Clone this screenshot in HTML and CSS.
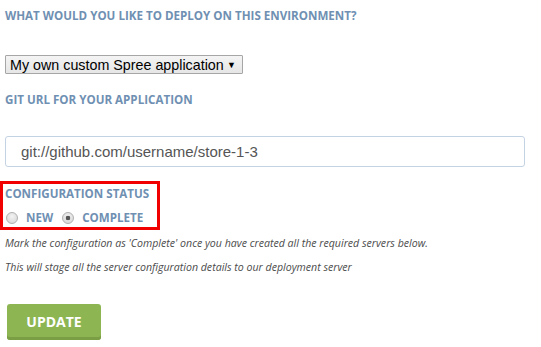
FILE: index.html
```html
<!DOCTYPE html>
<html>
<head>
<meta charset="utf-8">
<link rel="stylesheet" href="styles.css">
</head>
<body>
<form class="form">
  <div class="label label-first">WHAT WOULD YOU LIKE TO DEPLOY ON THIS ENVIRONMENT?</div>
  <div class="select"><span class="select-text">My own custom Spree application</span><span class="select-arrow">▼</span></div>
  <div class="label label-git">GIT URL FOR YOUR APPLICATION</div>
  <input class="text-input" type="text" value="git://github.com/username/store-1-3">
  <div class="status-box">
    <div class="label">CONFIGURATION STATUS</div>
    <div class="radios">
      <label class="radio-item"><input class="radio" type="radio" name="status"><span>NEW</span></label>
      <label class="radio-item"><input class="radio" type="radio" name="status" checked><span>COMPLETE</span></label>
    </div>
  </div>
  <p class="hint hint-first">Mark the configuration as 'Complete' once you have created all the required servers below.</p>
  <p class="hint">This will stage all the server configuration details to our deployment server</p>
  <button class="btn" type="button">UPDATE</button>
</form>
</body>
</html>
```

FILE: styles.css
```css
html, body {
  margin: 0;
  padding: 0;
  background: #ffffff;
}
.form {
  display: flex;
  flex-direction: column;
  align-items: flex-start;
  padding-left: 5px;
  font-family: "Open Sans", sans-serif;
}
.label {
  font-family: "Open Sans", sans-serif;
  font-weight: 700;
  font-size: 11.6px;
  line-height: 16px;
  color: #6f90b2;
  white-space: nowrap;
}
.label-first {
  margin-top: 8px;
}
.select {
  margin-top: 31px;
  box-sizing: border-box;
  height: 19px;
  width: 238px;
  display: flex;
  align-items: center;
  justify-content: space-between;
  padding: 0 6px 0 4px;
  border: 1px solid #a6a6a6;
  border-radius: 1px;
  background: linear-gradient(#f4f4f4, #e6e6e6);
  font-family: "Liberation Sans", Arial, sans-serif;
  font-size: 14.3px;
  color: #000;
  white-space: nowrap;
}
.select-arrow {
  font-size: 9px;
}
.label-git {
  margin-top: 18px;
}
.text-input {
  margin-top: 28px;
  box-sizing: border-box;
  width: 520px;
  height: 31px;
  border: 1px solid #c3d3e3;
  border-radius: 3px;
  padding: 0 15px;
  font-family: "Liberation Sans", Arial, sans-serif;
  font-size: 15px;
  color: #555;
  outline: none;
}
.status-box {
  margin-top: 14px;
  margin-left: -5px;
  box-sizing: border-box;
  width: 160px;
  height: 49px;
  border: 3px solid #f00000;
  padding: 2px 0 0 2px;
}
.radios {
  display: flex;
  align-items: center;
  margin-top: 8px;
}
.radio-item {
  display: flex;
  align-items: center;
  font-weight: 700;
  font-size: 11.6px;
  line-height: 16px;
  color: #6f90b2;
  margin-right: 8px;
}
.radio {
  appearance: none;
  -webkit-appearance: none;
  box-sizing: border-box;
  width: 12px;
  height: 12px;
  margin: 0 8px 0 1px;
  border: 1px solid #b0b0b0;
  border-radius: 50%;
  background: radial-gradient(circle at 50% 35%, #f2f2f2, #d4d4d4);
}
.radio:checked {
  background: radial-gradient(circle, #555 0 2px, transparent 2.6px), radial-gradient(circle at 50% 35%, #f2f2f2, #d4d4d4);
}
.hint {
  margin: 0;
  font-family: "Open Sans", sans-serif;
  font-style: italic;
  font-size: 10.6px;
  line-height: 16px;
  color: #4c4c4c;
  white-space: nowrap;
}
.hint-first {
  margin-top: 5px;
}
.hint + .hint {
  margin-top: 8px;
}
.btn {
  margin-top: 29px;
  margin-left: 2px;
  width: 94px;
  height: 36px;
  border: none;
  border-radius: 3px;
  background: #8db653;
  box-shadow: inset 0 -3px 0 #7a9e44;
  color: #fff;
  font-family: "Open Sans", sans-serif;
  font-weight: 700;
  font-size: 14px;
  padding: 0 0 2px;
}
```
